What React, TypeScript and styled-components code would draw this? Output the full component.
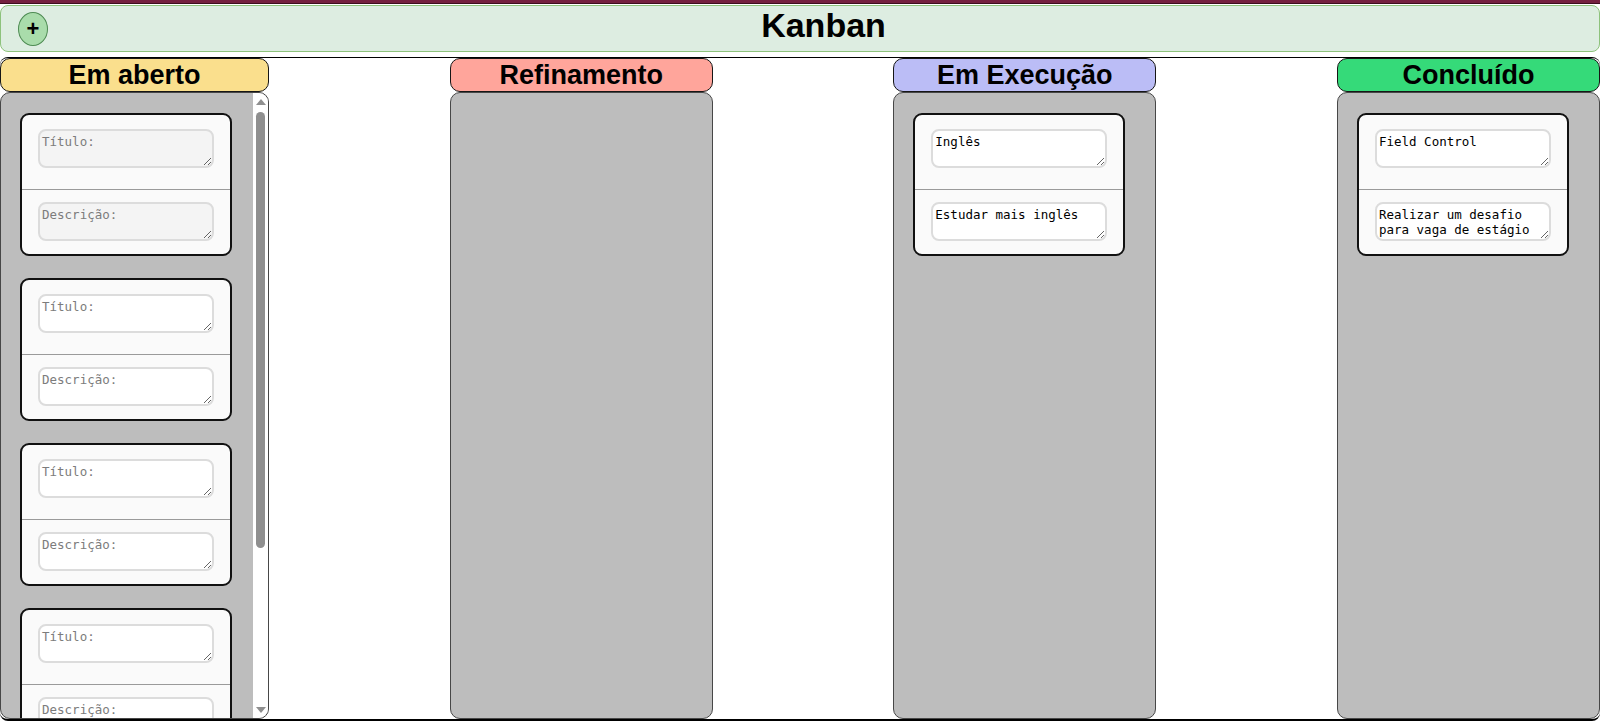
import React from "react";
import styled, { createGlobalStyle } from "styled-components";

const GlobalStyle = createGlobalStyle`
  html, body {
    margin: 0;
    padding: 0;
    background: #ffffff;
  }
  body {
    font-family: "Liberation Sans", Arial, sans-serif;
  }
  * {
    box-sizing: border-box;
  }
`;

const Page = styled.div`
  height: 726px;
  display: flex;
  flex-direction: column;
  overflow: hidden;
`;

const TopStrip = styled.div`
  flex-shrink: 0;
  height: 4px;
  background: #74203f;
  border-bottom: 1px solid #3e0c1f;
`;

const Header = styled.header`
  flex-shrink: 0;
  margin-top: 1px;
  height: 47px;
  display: flex;
  align-items: center;
  padding-left: 17px;
  background: #ddede1;
  border: 1px solid #8dc27c;
  border-radius: 8px;
`;

const AddButton = styled.button`
  width: 30px;
  height: 34px;
  padding: 0;
  border-radius: 50%;
  background: #a9dcab;
  border: 1px solid #4e8b53;
  color: #000;
  font-family: "Liberation Sans", Arial, sans-serif;
  font-size: 22px;
  font-weight: bold;
  line-height: 1;
  display: flex;
  align-items: center;
  justify-content: center;
  cursor: pointer;
`;

const Title = styled.h1`
  flex: 1;
  align-self: flex-start;
  margin: 0;
  text-align: center;
  font-size: 34px;
  font-weight: bold;
  line-height: 38px;
  color: #000;
`;

const Board = styled.main`
  flex: 1;
  min-height: 0;
  margin: 5px 0;
  display: flex;
  justify-content: space-between;
  border-top: 1px solid #000;
  border-bottom: 2px solid #000;
  border-radius: 8px;
`;

const Column = styled.section<{ $width: number }>`
  width: ${(props) => props.$width}px;
  min-height: 0;
  display: flex;
  flex-direction: column;
`;

const ColumnHeader = styled.h2<{ $color: string }>`
  flex-shrink: 0;
  margin: 0;
  height: 34px;
  background: ${(props) => props.$color};
  border: 1px solid #161616;
  border-radius: 10px;
  text-align: center;
  font-size: 27px;
  font-weight: bold;
  line-height: 32px;
  color: #000;
`;

const ColumnBody = styled.div`
  flex: 1;
  min-height: 0;
  display: flex;
  background: #bdbdbd;
  border: 1px solid #474747;
  border-radius: 10px;
  overflow: hidden;
`;

const CardList = styled.div`
  flex: 1;
  min-width: 0;
  display: flex;
  flex-direction: column;
  gap: 22px;
  padding: 20px 0 20px 19px;
  overflow: hidden;
`;

const barGray = "#8f8f8f";

const ScrollRail = styled.div`
  flex-shrink: 0;
  width: 15px;
  display: flex;
  flex-direction: column;
  align-items: center;
  background: #ffffff;
`;

const ArrowBox = styled.div`
  flex-shrink: 0;
  height: 17px;
  width: 100%;
  display: flex;
  align-items: center;
  justify-content: center;
`;

const Arrow = styled.span<{ $down?: boolean }>`
  width: 0;
  height: 0;
  border-left: 5px solid transparent;
  border-right: 5px solid transparent;
  ${(props) =>
    props.$down
      ? `border-top: 6px solid ${barGray};`
      : `border-bottom: 6px solid ${barGray};`}
`;

const Track = styled.div`
  flex: 1;
  width: 100%;
  padding: 2px 3px;
`;

const Thumb = styled.div`
  width: 100%;
  height: 436px;
  background: ${barGray};
  border-radius: 5px;
`;

const Card = styled.article`
  flex-shrink: 0;
  width: 212px;
  background: #fafafa;
  border: 2px solid #111;
  border-radius: 9px;
  overflow: hidden;
`;

const CardSection = styled.div<{ $first?: boolean }>`
  padding: ${(props) => (props.$first ? "14px 16px 21px" : "12px 16px 13px")};
  & + & {
    border-top: 1px solid #9a9a9a;
  }
`;

const Field = styled.textarea<{ $muted?: boolean }>`
  display: block;
  width: 100%;
  height: 39px;
  margin: 0;
  padding: 3px 2px 0 2px;
  border: 2px solid #dcdcdc;
  border-radius: 8px;
  background: ${(props) => (props.$muted ? "#f4f4f4" : "#ffffff")};
  color: #000;
  font-family: "DejaVu Sans Mono", "Liberation Mono", monospace;
  font-size: 12.5px;
  line-height: 15px;
  outline: none;
  &::placeholder {
    color: #7c7c7c;
  }
`;

interface Task {
  id: number;
  title: string;
  description: string;
}

interface ColumnData {
  name: string;
  color: string;
  width: number;
  tasks: Task[];
  blanks?: number;
}

const columns: ColumnData[] = [
  { name: "Em aberto", color: "#fadf8d", width: 269, tasks: [], blanks: 5 },
  { name: "Refinamento", color: "#ffa59b", width: 263, tasks: [] },
  {
    name: "Em Execução",
    color: "#bbbdf6",
    width: 263,
    tasks: [{ id: 1, title: "Inglês", description: "Estudar mais inglês" }],
  },
  {
    name: "Concluído",
    color: "#35da79",
    width: 263,
    tasks: [
      {
        id: 2,
        title: "Field Control",
        description: "Realizar um desafio para vaga de estágio",
      },
    ],
  },
];

const TaskCard: React.FC<{ task?: Task; muted?: boolean }> = ({ task, muted }) => (
  <Card>
    <CardSection $first>
      <Field $muted={muted} placeholder="Título:" defaultValue={task?.title} />
    </CardSection>
    <CardSection>
      <Field $muted={muted} placeholder="Descrição:" defaultValue={task?.description} />
    </CardSection>
  </Card>
);

const App: React.FC = () => {
  return (
    <Page>
      <GlobalStyle />
      <TopStrip />
      <Header>
        <AddButton>+</AddButton>
        <Title>Kanban</Title>
      </Header>
      <Board>
        {columns.map((col) => (
          <Column key={col.name} $width={col.width}>
            <ColumnHeader $color={col.color}>{col.name}</ColumnHeader>
            <ColumnBody>
              <CardList>
                {Array.from({ length: col.blanks || 0 }).map((_, i) => (
                  <TaskCard key={`blank-${i}`} muted={i === 0} />
                ))}
                {col.tasks.map((task) => (
                  <TaskCard key={task.id} task={task} />
                ))}
              </CardList>
              {col.blanks ? (
                <ScrollRail>
                  <ArrowBox>
                    <Arrow />
                  </ArrowBox>
                  <Track>
                    <Thumb />
                  </Track>
                  <ArrowBox>
                    <Arrow $down />
                  </ArrowBox>
                </ScrollRail>
              ) : null}
            </ColumnBody>
          </Column>
        ))}
      </Board>
    </Page>
  );
};

export default App;
